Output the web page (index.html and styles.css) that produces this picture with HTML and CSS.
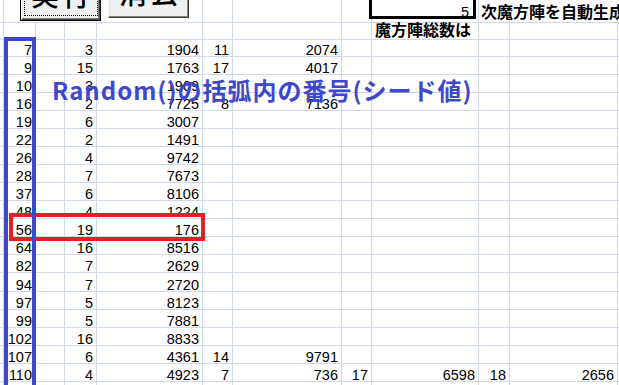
FILE: index.html
```html
<!DOCTYPE html>
<html lang="ja">
<head>
<meta charset="utf-8">
<title>魔方陣</title>
<link rel="stylesheet" href="styles.css">
</head>
<body>
<div class="sheet">
  <div class="row tall"><span></span><span></span><span></span><span></span><span></span><span></span><span></span><span></span><span class="count">5</span><span class="jp top-label">次魔方陣を自動生成</span><span class="nob"></span><span></span></div>
  <div class="row tall"><span></span><span></span><span></span><span></span><span></span><span></span><span></span><span></span><span class="jp total">魔方陣総数は</span><span></span><span></span><span></span></div>
  <div class="row tall"><span></span><span>7</span><span></span><span>3</span><span>1904</span><span>11</span><span>2074</span><span></span><span></span><span></span><span></span><span></span></div>
  <div class="row"><span></span><span>9</span><span></span><span>15</span><span>1763</span><span>17</span><span>4017</span><span></span><span></span><span></span><span></span><span></span></div>
  <div class="row"><span></span><span>10</span><span></span><span>3</span><span>1969</span><span></span><span></span><span></span><span></span><span></span><span></span><span></span></div>
  <div class="row"><span></span><span>16</span><span></span><span>2</span><span>7725</span><span>8</span><span>7136</span><span></span><span></span><span></span><span></span><span></span></div>
  <div class="row"><span></span><span>19</span><span></span><span>6</span><span>3007</span><span></span><span></span><span></span><span></span><span></span><span></span><span></span></div>
  <div class="row"><span></span><span>22</span><span></span><span>2</span><span>1491</span><span></span><span></span><span></span><span></span><span></span><span></span><span></span></div>
  <div class="row"><span></span><span>26</span><span></span><span>4</span><span>9742</span><span></span><span></span><span></span><span></span><span></span><span></span><span></span></div>
  <div class="row"><span></span><span>28</span><span></span><span>7</span><span>7673</span><span></span><span></span><span></span><span></span><span></span><span></span><span></span></div>
  <div class="row"><span></span><span>37</span><span></span><span>6</span><span>8106</span><span></span><span></span><span></span><span></span><span></span><span></span><span></span></div>
  <div class="row"><span></span><span>48</span><span></span><span>4</span><span>1224</span><span></span><span></span><span></span><span></span><span></span><span></span><span></span></div>
  <div class="row"><span></span><span>56</span><span></span><span>19</span><span>176</span><span></span><span></span><span></span><span></span><span></span><span></span><span></span></div>
  <div class="row"><span></span><span>64</span><span></span><span>16</span><span>8516</span><span></span><span></span><span></span><span></span><span></span><span></span><span></span></div>
  <div class="row"><span></span><span>82</span><span></span><span>7</span><span>2629</span><span></span><span></span><span></span><span></span><span></span><span></span><span></span></div>
  <div class="row tall"><span></span><span>94</span><span></span><span>7</span><span>2720</span><span></span><span></span><span></span><span></span><span></span><span></span><span></span></div>
  <div class="row"><span></span><span>97</span><span></span><span>5</span><span>8123</span><span></span><span></span><span></span><span></span><span></span><span></span><span></span></div>
  <div class="row"><span></span><span>99</span><span></span><span>5</span><span>7881</span><span></span><span></span><span></span><span></span><span></span><span></span><span></span></div>
  <div class="row"><span></span><span>102</span><span></span><span>16</span><span>8833</span><span></span><span></span><span></span><span></span><span></span><span></span><span></span></div>
  <div class="row"><span></span><span>107</span><span></span><span>6</span><span>4361</span><span>14</span><span>9791</span><span></span><span></span><span></span><span></span><span></span></div>
  <div class="row"><span></span><span>110</span><span></span><span>4</span><span>4923</span><span>7</span><span>736</span><span>17</span><span>6598</span><span>18</span><span>2656</span><span></span></div>
  <div class="row"><span></span><span></span><span></span><span></span><span></span><span></span><span></span><span></span><span></span><span></span><span></span><span></span></div>

  <div class="btn btn-run"><span class="focus"></span><span class="cap">実行</span></div>
  <div class="btn btn-clear"><span class="cap">消去</span></div>

  <div class="note">Random()の括弧内の番号(シード値)</div>
  <div class="mark-red"></div>
  <div class="mark-blue"></div>
</div>
</body>
</html>
```
FILE: styles.css
```css
* { box-sizing: border-box; }
html, body { margin: 0; padding: 0; }
body {
  width: 619px;
  height: 385px;
  overflow: hidden;
  background: #fff;
  color: #000;
  font-family: "Liberation Sans", Arial, sans-serif;
  font-size: 14.5px;
}
.sheet { position: relative; width: 619px; }
.row {
  display: grid;
  grid-template-columns: 3px 33px 29px 32px 106px 30px 109px 30px 107px 31px 108px 40px;
  height: 18px;
}
.row.tall { height: 19px; }
.row > span {
  border-right: 1px solid #d0d7e5;
  border-bottom: 1px solid #d0d7e5;
  display: flex;
  align-items: flex-end;
  justify-content: flex-end;
  padding-right: 3px;
  line-height: 12px;
  white-space: nowrap;
  position: relative;
}
.jp {
  font-family: "Noto Sans CJK JP", "Liberation Sans", sans-serif;
  font-weight: 700;
  font-size: 16px;
}
.row > span.total {
  justify-content: flex-start;
  padding-left: 3px;
  line-height: 20px;
}
.row > span.top-label {
  justify-content: flex-start;
  padding-left: 2px;
  line-height: 22px;
  border-right: 0;
  z-index: 1;
}
.row > span.nob { border-right: 0; }
.row > span.count {
  padding-right: 9px;
  line-height: 19px;
}
.row > span.count::after {
  content: "";
  position: absolute;
  left: -3px;
  right: 2px;
  top: -10px;
  bottom: 3px;
  border: 3px solid #000;
}

.btn {
  position: absolute;
  top: -30px;
  background: #f0f0f0;
  border: 1px solid;
  border-color: #ffffff #404040 #404040 #ffffff;
  box-shadow: inset -1px -1px 0 #808080, inset 1px 1px 0 #e3e3e3;
  display: flex;
  align-items: flex-end;
  justify-content: center;
  padding-bottom: 11px;
  z-index: 3;
}
.btn-run {
  left: 21px;
  width: 79px;
  height: 50px;
  outline: 1px solid #000;
}
.btn-clear {
  left: 108px;
  width: 81px;
  height: 48px;
}
.cap {
  font-family: "Noto Sans CJK JP", sans-serif;
  font-size: 28px;
  font-weight: 500;
  line-height: 28px;
  letter-spacing: 3px;
  padding-left: 3px;
  color: #000;
}
.focus {
  position: absolute;
  left: 2px;
  right: 1px;
  top: 2px;
  bottom: 3px;
  border: 1px dotted #000;
}

.note {
  position: absolute;
  left: 52px;
  top: 78px;
  font-family: "Noto Sans CJK JP", sans-serif;
  font-weight: 700;
  font-size: 24px;
  line-height: 24px;
  letter-spacing: 1px;
  color: #3f48cc;
  white-space: nowrap;
  z-index: 4;
}
.mark-red {
  position: absolute;
  left: 9px;
  top: 213px;
  width: 196px;
  height: 28px;
  border: 4px solid #ed1c24;
  z-index: 5;
}
.mark-blue {
  position: absolute;
  left: 4px;
  top: 37px;
  width: 32px;
  height: 400px;
  border: 4px solid #3f48cc;
  z-index: 6;
}
```
